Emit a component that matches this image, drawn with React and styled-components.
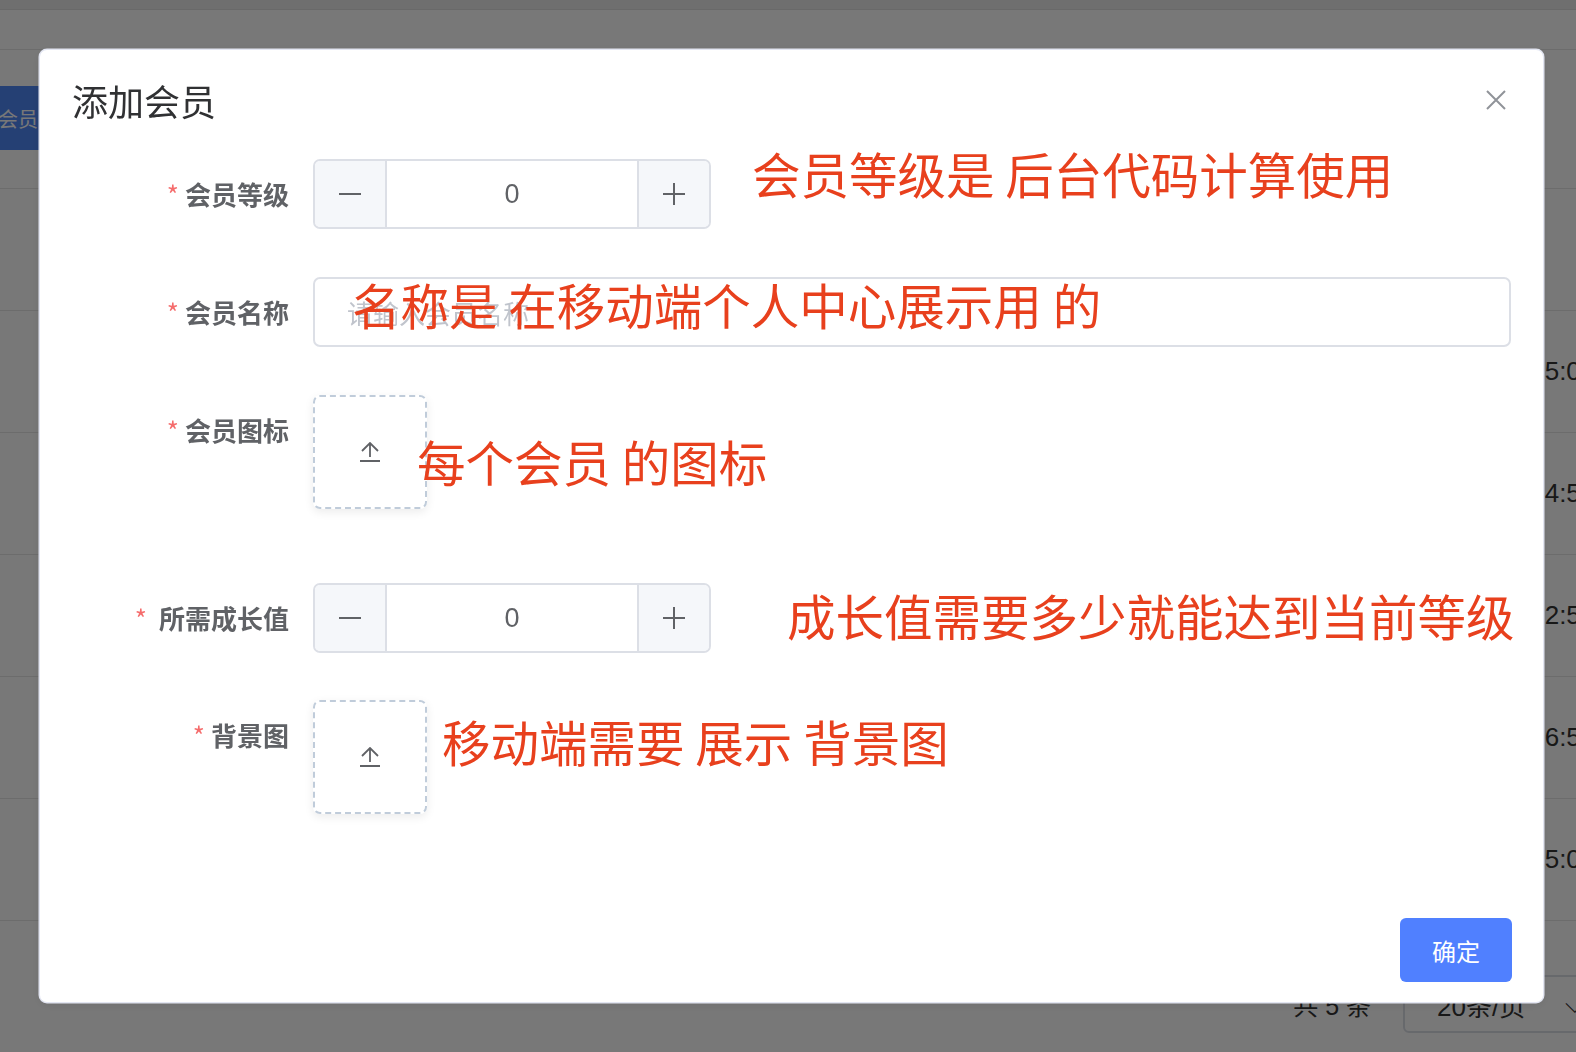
import React from 'react'
import styled, { createGlobalStyle } from 'styled-components'

const GlobalStyle = createGlobalStyle`
  html, body {
    margin: 0;
    padding: 0;
    background: #ffffff;
    font-family: "Liberation Sans", "Noto Sans CJK SC", sans-serif;
  }
  * { box-sizing: border-box; }
`

const Page = styled.div`
  width: 1576px;
  height: 1052px;
  overflow: hidden;
  background: #ffffff;
  color: #333333;
`

const TopBar = styled.div`
  height: 10px;
  background: #ececec;
  border-bottom: 1px solid #e0e0e0;
`

const Breadcrumb = styled.div`
  height: 40px;
  border-bottom: 1px solid #e6e6e6;
`

const Toolbar = styled.div`
  height: 138px;
  display: flex;
  align-items: center;
  padding-bottom: 2px;
`

const PrimaryButton = styled.button`
  margin-left: -66px;
  height: 64px;
  padding: 0 24px;
  border: none;
  border-radius: 6px;
  background: #4f88f7;
  color: #ffffff;
  font-family: "Noto Sans CJK SC", sans-serif;
  font-size: 20px;
`

const Table = styled.div`
  border-top: 1px solid #e6e6e6;
`

const Row = styled.div`
  height: 122px;
  display: grid;
  grid-template-columns: 1fr 186px;
  align-items: center;
  border-bottom: 1px solid #e6e6e6;
  font-size: 26px;
  color: #333333;
  white-space: nowrap;
`

const Pagination = styled.div`
  display: flex;
  align-items: center;
  justify-content: flex-end;
  gap: 32px;
  padding-top: 54px;
  margin-right: -40px;
  font-family: "Liberation Sans", "Noto Sans CJK SC", sans-serif;
  font-size: 25px;
  color: #333333;
`

const PageSize = styled.div`
  width: 213px;
  height: 58px;
  border: 2px solid #dcdfe6;
  border-radius: 6px;
  display: flex;
  align-items: center;
  padding-left: 32px;
  gap: 40px;
  font-size: 26px;
  color: #333;
`

const Mask = styled.div`
  position: fixed;
  inset: 0;
  background: rgba(0, 0, 0, 0.53);
`

const Dialog = styled.div`
  position: fixed;
  left: 40px;
  top: 50px;
  width: 1503px;
  height: 952px;
  background: #ffffff;
  border-radius: 7px;
  box-shadow: 0 0 0 1.5px #e3e6f2, 0 2px 12px rgba(0, 0, 0, 0.1);
  display: flex;
  flex-direction: column;
  font-family: "Noto Sans CJK SC", sans-serif;
`

const Header = styled.div`
  display: flex;
  align-items: center;
  justify-content: space-between;
  padding: 32px 37px 0 32px;
`

const Title = styled.span`
  font-size: 36px;
  line-height: 36px;
  color: #303133;
`

const CloseButton = styled.button`
  width: 20px;
  height: 20px;
  padding: 0;
  border: none;
  background: none;
  display: flex;
`

const Body = styled.div`
  padding: 41px 32px 0 32px;
`

const FormItem = styled.div`
  position: relative;
  display: flex;
  margin-bottom: ${p => p.mb || 0}px;
`

const Label = styled.label`
  width: 241px;
  flex-shrink: 0;
  padding-right: 24px;
  text-align: right;
  line-height: 70px;
  font-size: 26px;
  font-weight: 600;
  color: #606266;
`

const Star = styled.span`
  color: #f56c6c;
  font-weight: 400;
  margin-right: ${p => p.gap || 6}px;
`

const NumberBox = styled.div`
  width: 398px;
  height: 70px;
  display: flex;
  border: 2px solid #dcdfe6;
  border-radius: 7px;
  overflow: hidden;
`

const Step = styled.span`
  width: 72px;
  display: flex;
  align-items: center;
  justify-content: center;
  background: #f5f7fa;
  ${p => (p.side === 'left' ? 'border-right' : 'border-left')}: 2px solid #dcdfe6;
`

const NumberValue = styled.span`
  flex: 1;
  display: flex;
  align-items: center;
  justify-content: center;
  font-family: "Liberation Sans", sans-serif;
  font-size: 27px;
  color: #606266;
`

const TextInput = styled.div`
  flex: 1;
  height: 70px;
  border: 2px solid #dcdfe6;
  border-radius: 7px;
  padding-left: 32px;
  display: flex;
  align-items: center;
  font-size: 26px;
  color: #c0c4cc;
`

const UploadBox = styled.div`
  width: 114px;
  height: 114px;
  border: 2px dashed #c0ccda;
  border-radius: 7px;
  display: flex;
  align-items: center;
  justify-content: center;
  box-shadow: 0 3px 10px rgba(0, 0, 0, 0.08);
`

const Note = styled.span`
  position: absolute;
  left: ${p => p.x}px;
  top: ${p => p.y}px;
  font-family: "Noto Sans CJK SC", sans-serif;
  font-size: 48.5px;
  line-height: 48px;
  color: #e8401d;
  white-space: pre;
  pointer-events: none;
`

const Footer = styled.div`
  margin-top: auto;
  display: flex;
  justify-content: flex-end;
  padding: 0 31px 20px 0;
`

const ConfirmButton = styled.button`
  width: 112px;
  height: 64px;
  border: none;
  border-radius: 6px;
  background: #5080ff;
  color: #ffffff;
  font-family: "Noto Sans CJK SC", sans-serif;
  font-size: 24px;
`

const Minus = () => (
  <svg width="24" height="24" viewBox="0 0 24 24">
    <path d="M1 12h22" stroke="#606266" strokeWidth="2" />
  </svg>
)

const Plus = () => (
  <svg width="24" height="24" viewBox="0 0 24 24">
    <path d="M1 12h22M12 1v22" stroke="#606266" strokeWidth="2" />
  </svg>
)

const UploadIcon = () => (
  <svg width="22" height="20" viewBox="0 0 22 20">
    <path d="M3 9l8-8 8 8M11 1v14M1 19h20" fill="none" stroke="#606266" strokeWidth="1.8" />
  </svg>
)

const CloseIcon = () => (
  <svg width="20" height="20" viewBox="0 0 20 20">
    <path d="M1 1l18 18M19 1L1 19" stroke="#909399" strokeWidth="2" />
  </svg>
)

function StepperInput() {
  return (
    <NumberBox>
      <Step side="left"><Minus /></Step>
      <NumberValue>0</NumberValue>
      <Step side="right"><Plus /></Step>
    </NumberBox>
  )
}

const times = ['2022-03-21 15:05:08', '2022-03-21 14:52:31', '2022-03-21 12:56:17', '2022-03-21 16:54:02', '2022-03-21 15:03:46']

export default function App() {
  return (
    <>
      <GlobalStyle />
      <Page>
        <TopBar />
        <Breadcrumb />
        <Toolbar>
          <PrimaryButton>添加会员</PrimaryButton>
        </Toolbar>
        <Table>
          <Row><span /><span>创建时间</span></Row>
          {times.map(t => (
            <Row key={t}><span /><span>{t}</span></Row>
          ))}
        </Table>
        <Pagination>
          <span>共 5 条</span>
          <PageSize>
            <span>20条/页</span>
            <span>⌵</span>
          </PageSize>
        </Pagination>
      </Page>

      <Mask />
      <Dialog>
        <Header>
          <Title>添加会员</Title>
          <CloseButton><CloseIcon /></CloseButton>
        </Header>
        <Body>
          <FormItem mb={48}>
            <Label><Star>*</Star>会员等级</Label>
            <StepperInput />
            <Note x={680} y={-10}>会员等级是 后台代码计算使用</Note>
          </FormItem>
          <FormItem mb={48}>
            <Label><Star>*</Star>会员名称</Label>
            <TextInput>请输入会员名称</TextInput>
            <Note x={280} y={3}>名称是 在移动端个人中心展示用 的</Note>
          </FormItem>
          <FormItem mb={74}>
            <Label><Star>*</Star>会员图标</Label>
            <UploadBox><UploadIcon /></UploadBox>
            <Note x={345} y={42}>每个会员 的图标</Note>
          </FormItem>
          <FormItem mb={47}>
            <Label><Star gap={12}>*</Star>所需成长值</Label>
            <StepperInput />
            <Note x={715} y={8}>成长值需要多少就能达到当前等级</Note>
          </FormItem>
          <FormItem>
            <Label><Star>*</Star>背景图</Label>
            <UploadBox><UploadIcon /></UploadBox>
            <Note x={370} y={17}>移动端需要 展示 背景图</Note>
          </FormItem>
        </Body>
        <Footer>
          <ConfirmButton>确定</ConfirmButton>
        </Footer>
      </Dialog>
    </>
  )
}
